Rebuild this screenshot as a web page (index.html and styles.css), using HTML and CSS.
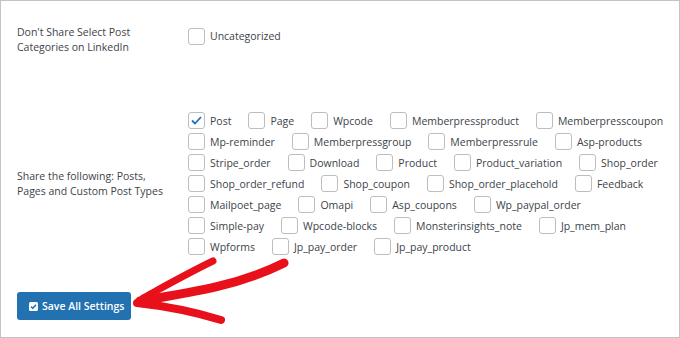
FILE: index.html
```html
<!DOCTYPE html>
<html lang="en">
<head>
  <meta charset="UTF-8">
  <title>LinkedIn Sharing Settings</title>
  <link rel="stylesheet" href="styles.css">
</head>
<body>
  <div class="panel">
    <div class="row row-cats">
      <div class="row-label">Don't Share Select Post<br>Categories on LinkedIn</div>
      <div class="row-field">
        <label class="check"><span class="box"></span>Uncategorized</label>
      </div>
    </div>

    <div class="row row-types">
      <div class="row-label">Share the following: Posts,<br>Pages and Custom Post Types</div>
      <div class="row-field types" id="types"></div>
    </div>

    <button class="save">
      <span class="save-icon">
        <svg width="9" height="9" viewBox="0 0 9 9"><rect width="9" height="9" rx="1.5" fill="#fff"/><path d="M2 4.6 L3.8 6.3 L7 2.8" fill="none" stroke="#2271b1" stroke-width="1.5"/></svg>
      </span>
      Save All Settings
    </button>

    <svg class="arrow" width="680" height="338" viewBox="0 0 680 338">
      <path d="M213 261 C190 272 165 286 143 298" stroke="#e8101a" stroke-width="7" fill="none" stroke-linecap="round"/>
      <path d="M284 263 C240 285 195 292 140 301" stroke="#e8101a" stroke-width="9" fill="none" stroke-linecap="round"/>
      <path d="M137 303 C165 306 195 312 221 320" stroke="#e8101a" stroke-width="8" fill="none" stroke-linecap="round"/>
    </svg>
  </div>

  <script>
    const types = ["Post", "Page", "Wpcode", "Memberpressproduct", "Memberpresscoupon",
      "Mp-reminder", "Memberpressgroup", "Memberpressrule", "Asp-products",
      "Stripe_order", "Download", "Product", "Product_variation", "Shop_order",
      "Shop_order_refund", "Shop_coupon", "Shop_order_placehold", "Feedback",
      "Mailpoet_page", "Omapi", "Asp_coupons", "Wp_paypal_order",
      "Simple-pay", "Wpcode-blocks", "Monsterinsights_note", "Jp_mem_plan",
      "Wpforms", "Jp_pay_order", "Jp_pay_product"];
    const checked = ["Post"];
    const typesDiv = document.getElementById("types");

    types.forEach((t) => {
      const label = document.createElement("label");
      label.className = "check";
      const box = document.createElement("span");
      box.className = "box";
      if (checked.includes(t)) {
        box.innerHTML = '<svg width="11" height="9" viewBox="0 0 11 9"><path d="M1 4.5 L4 7.5 L10 1" fill="none" stroke="#2271b1" stroke-width="1.8"/></svg>';
      }
      label.appendChild(box);
      label.appendChild(document.createTextNode(t));
      typesDiv.appendChild(label);
    });
  </script>
</body>
</html>
```

FILE: styles.css
```css
html, body {
  margin: 0;
  background: #fff;
}
body {
  font-family: "Open Sans", "Noto Sans", sans-serif;
  font-size: 10.5px;
  color: #3c434a;
}
.panel {
  position: relative;
  box-sizing: border-box;
  width: 680px;
  height: 338px;
  border: 1px solid #c3c4c7;
  padding: 0 0 0 16px;
}
.row {
  display: flex;
}
.row-label {
  width: 171px;
  flex-shrink: 0;
  line-height: 15px;
}
.row-cats {
  padding-top: 24px;
}
.row-cats .row-field {
  padding-top: 2px;
}
.row-types {
  margin-top: 55px;
  align-items: center;
}
.types {
  width: 482px;
  display: flex;
  flex-wrap: wrap;
  column-gap: 17px;
}
.check {
  display: inline-flex;
  align-items: center;
  gap: 5px;
  height: 21px;
  white-space: nowrap;
}
.row-cats .check {
  height: 18px;
}
.box {
  box-sizing: border-box;
  width: 17px;
  height: 17px;
  border: 1px solid #bdbdbd;
  border-radius: 3px;
  background: #fff;
  display: flex;
  align-items: center;
  justify-content: center;
}
.save {
  margin-top: 35px;
  display: flex;
  align-items: center;
  gap: 4px;
  width: 114px;
  height: 28px;
  padding: 0 0 0 12px;
  border: none;
  border-radius: 3px;
  background: #2271b1;
  color: #fff;
  font-family: "Open Sans", "Noto Sans", sans-serif;
  font-size: 10.5px;
  font-weight: 600;
  cursor: pointer;
}
.save-icon {
  display: flex;
}
.arrow {
  position: absolute;
  left: -1px;
  top: -1px;
  pointer-events: none;
}
```
